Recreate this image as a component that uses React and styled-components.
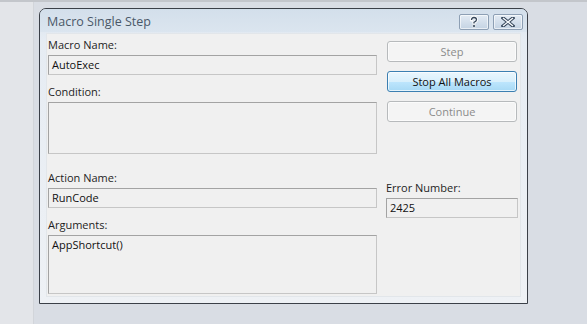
import React from 'react'
import styled, { createGlobalStyle } from 'styled-components'

const Global = createGlobalStyle`
  html, body { margin: 0; padding: 0; }
  body {
    width: 587px;
    height: 324px;
    overflow: hidden;
    background: #d9dde4;
    font-family: "Open Sans", "Noto Sans", sans-serif;
  }
`

const Desktop = styled.div`
  display: flex;
  width: 587px;
  height: 324px;
  border-top: 2px solid #c3c6cb;
  box-sizing: border-box;
`

const SideStrip = styled.div`
  width: 33px;
  background: #e3e5e9;
  border-right: 1px solid #d2d5da;
`

const Stage = styled.div`
  flex: 1;
  padding: 6px 0 0 5px;
`

const Window = styled.div`
  width: 489px;
  height: 296px;
  box-sizing: border-box;
  border: 1px solid #3b4048;
  border-radius: 7px 7px 0 0;
  background: linear-gradient(#d6e1ec, #e6ecf3 30px, #eef1f5);
  display: flex;
  flex-direction: column;
  overflow: hidden;
`

const TitleBar = styled.div`
  height: 23px;
  flex-shrink: 0;
  display: flex;
  align-items: center;
  justify-content: space-between;
  padding: 0 4px 0 7px;
  background: linear-gradient(#d3dfeb, #dbe5ef);
`

const Title = styled.span`
  font-size: 12.5px;
  color: #4a5868;
  margin-top: 1px;
`

const CaptionButtons = styled.div`
  display: flex;
  gap: 4px;
  margin-top: 3px;
`

const CaptionButton = styled.div`
  width: ${p => p.$w}px;
  height: 16px;
  box-sizing: border-box;
  border: 1px solid #8d9fb4;
  border-radius: 2px;
  background: linear-gradient(#e3ebf4, #c4d3e3);
  box-shadow: inset 0 0 0 1px rgba(255,255,255,0.6);
  display: flex;
  align-items: center;
  justify-content: center;
`

const Client = styled.div`
  flex: 1;
  min-height: 0;
  margin: 1px 6px 6px 6px;
  background: #f0f0f0;
  border: 1px solid #e2e6ea;
  display: grid;
  grid-template-columns: 329px 130px;
  align-items: start;
  column-gap: 10px;
  padding: 0 0 0 1px;
`

const Column = styled.div`
  display: flex;
  flex-direction: column;
`

const Label = styled.div`
  font-size: 11px;
  line-height: 14px;
  color: #1e1e1e;
  margin-top: ${p => p.$top || 0}px;
  margin-bottom: 3px;
`

const Field = styled.div`
  height: ${p => p.$h || 20}px;
  box-sizing: border-box;
  border: 1px solid #a3a3a3;
  border-right-color: #c6c6c6;
  border-bottom-color: #c6c6c6;
  background: #f0f0f0;
  font-size: 11px;
  line-height: 17px;
  padding: 0 3px;
  color: #111;
  margin: 0 ${p => (p.$wide ? -1 : 0)}px;
`

const Button = styled.div`
  height: 21px;
  box-sizing: border-box;
  border: 1px solid ${p => (p.$default ? '#3c7fb1' : '#b7babc')};
  border-radius: 3px;
  background: ${p =>
    p.$default
      ? 'linear-gradient(#eaf6fd 0%, #d9f0fc 50%, #bee6fd 51%, #a7d9f5 100%)'
      : '#f4f4f4'};
  box-shadow: inset 0 0 0 1px ${p => (p.$default ? 'rgba(255,255,255,0.7)' : '#fbfbfb')};
  color: ${p => (p.$default ? '#111' : '#8b8b8b')};
  font-size: 11px;
  display: flex;
  align-items: center;
  justify-content: center;
  margin-top: ${p => p.$top || 0}px;
  margin-bottom: 9px;
`

export default function App() {
  return (
    <>
      <Global />
      <Desktop>
        <SideStrip />
        <Stage>
          <Window>
            <TitleBar>
              <Title>Macro Single Step</Title>
              <CaptionButtons>
                <CaptionButton $w={30}>
                  <svg width="12" height="12" viewBox="0 0 12 12">
                    <path d="M3.5 4 Q3.5 1.5 6 1.5 Q8.5 1.5 8.5 3.8 Q8.5 5.3 6 6.3 L6 7.5" fill="none" stroke="#fff" strokeWidth="3" strokeLinecap="round" />
                    <path d="M3.5 4 Q3.5 1.5 6 1.5 Q8.5 1.5 8.5 3.8 Q8.5 5.3 6 6.3 L6 7.5" fill="none" stroke="#36475b" strokeWidth="1.3" />
                    <rect x="4.8" y="8.8" width="2.4" height="2.4" fill="#36475b" stroke="#fff" strokeWidth="0.6" />
                  </svg>
                </CaptionButton>
                <CaptionButton $w={30}>
                  <svg width="14" height="10" viewBox="0 0 14 10">
                    <path d="M2 1 L12 9 M12 1 L2 9" stroke="#36475b" strokeWidth="3.4" strokeLinecap="square" />
                    <path d="M2 1 L12 9 M12 1 L2 9" stroke="#f4f7fa" strokeWidth="1.4" />
                  </svg>
                </CaptionButton>
              </CaptionButtons>
            </TitleBar>
            <Client>
              <Column>
                <Label $top={4}>Macro Name:</Label>
                <Field>AutoExec</Field>
                <Label $top={10}>Condition:</Label>
                <Field $h={52} />
                <Label $top={17}>Action Name:</Label>
                <Field>RunCode</Field>
                <Label $top={10}>Arguments:</Label>
                <Field $h={59}>AppShortcut()</Field>
              </Column>
              <Column>
                <Button $top={7}>Step</Button>
                <Button $default>Stop All Macros</Button>
                <Button>Continue</Button>
                <Label $top={50} style={{ marginLeft: -1 }}>Error Number:</Label>
                <Field $wide>2425</Field>
              </Column>
            </Client>
          </Window>
        </Stage>
      </Desktop>
    </>
  )
}
